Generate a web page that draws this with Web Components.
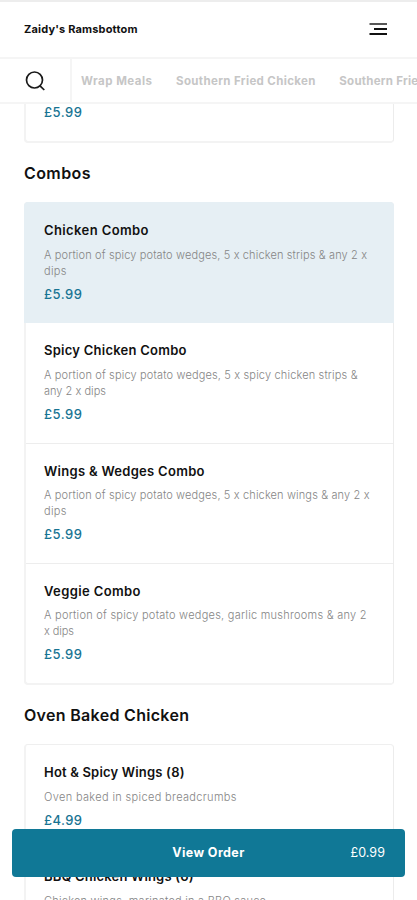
<!DOCTYPE html>
<html lang="en">
<head>
<meta charset="utf-8">
<title>Zaidy's Ramsbottom</title>
<style>
  html { background: #fff; }
  body {
    margin: 0;
    height: 900px;
    overflow: hidden;
    color: #111;
    font-family: Inter, "Open Sans", sans-serif;
  }
</style>
</head>
<body>

<menu-page>
  <site-header slot="header"><fit-text w="113.5">Zaidy's Ramsbottom</fit-text></site-header>
  <category-bar slot="header">
    <fit-text w="71">Wrap Meals</fit-text>
    <fit-text w="139.5">Southern Fried Chicken</fit-text>
    <fit-text w="127">Southern Fried Wraps</fit-text>
  </category-bar>

  <menu-card class="previous">
    <menu-item price="£5.99" class="tail"></menu-item>
  </menu-card>

  <menu-section>
    <fit-text slot="title" w="66.5">Combos</fit-text>
    <menu-card>
      <menu-item price="£5.99" selected>
        <fit-text slot="name" w="104.5">Chicken Combo</fit-text>
        <fit-text w="323">A portion of spicy potato wedges, 5 x chicken strips &amp; any 2 x</fit-text>
        <fit-text w="22.5">dips</fit-text>
      </menu-item>
      <menu-item price="£5.99">
        <fit-text slot="name" w="142.5">Spicy Chicken Combo</fit-text>
        <fit-text w="313.5">A portion of spicy potato wedges, 5 x spicy chicken strips &amp;</fit-text>
        <fit-text w="62">any 2 x dips</fit-text>
      </menu-item>
      <menu-item price="£5.99">
        <fit-text slot="name" w="160.5">Wings &amp; Wedges Combo</fit-text>
        <fit-text w="325.5">A portion of spicy potato wedges, 5 x chicken wings &amp; any 2 x</fit-text>
        <fit-text w="22.5">dips</fit-text>
      </menu-item>
      <menu-item price="£5.99">
        <fit-text slot="name" w="96.5">Veggie Combo</fit-text>
        <fit-text w="322.5">A portion of spicy potato wedges, garlic mushrooms &amp; any 2</fit-text>
        <fit-text w="30">x dips</fit-text>
      </menu-item>
    </menu-card>
  </menu-section>

  <menu-section>
    <fit-text slot="title" w="165">Oven Baked Chicken</fit-text>
    <menu-card>
      <menu-item price="£4.99">
        <fit-text slot="name" w="140.5">Hot &amp; Spicy Wings (8)</fit-text>
        <fit-text w="192.5">Oven baked in spiced breadcrumbs</fit-text>
      </menu-item>
      <menu-item price="£4.99">
        <fit-text slot="name" w="149.5">BBQ Chicken Wings (6)</fit-text>
        <fit-text w="222">Chicken wings, marinated in a BBQ sauce</fit-text>
      </menu-item>
    </menu-card>
  </menu-section>

  <order-bar slot="overlay" total="£0.99"><fit-text w="72">View Order</fit-text></order-bar>
</menu-page>

<script>
// every element here gets its shadow root the same way
class BaseElement extends HTMLElement {
  constructor() {
    super();
    this.attachShadow({ mode: "open" });
  }
  connectedCallback() {
    this.shadowRoot.innerHTML = this.render();
  }
}

// one line of text, tracked so that it runs to the width in "w"
class FitText extends BaseElement {
  render() {
    return `
      <style>
        :host { display: block; white-space: nowrap; width: max-content; }
        span { display: inline-block; }
      </style>
      <span><slot></slot></span>`;
  }
  fit() {
    const span = this.shadowRoot.querySelector("span");
    const count = this.textContent.length;
    const natural = span.getBoundingClientRect().width;
    span.style.letterSpacing = (this.getAttribute("w") - natural) / (count - 1) + "px";
  }
}

class MenuPage extends BaseElement {
  render() {
    return `
      <style>
        :host { display: block; height: 900px; overflow: hidden; }
        header { position: relative; z-index: 1; background: #fff; }
        main { padding: 0 23px 0 24px; }
      </style>
      <header><slot name="header"></slot></header>
      <main><slot></slot></main>
      <slot name="overlay"></slot>`;
  }
}

class SiteHeader extends BaseElement {
  render() {
    return `
      <style>
        :host {
          display: flex; align-items: center; justify-content: space-between;
          box-sizing: border-box; height: 59px; padding: 0 29px 1px 24px;
          border-top: 2px solid #ededed; border-bottom: 2px solid #f5f5f5;
          font-size: 11px; font-weight: 700;
        }
        svg { display: block; }
      </style>
      <slot></slot>
      <svg width="20" height="14" viewBox="0 0 20 14" fill="none" stroke="#111" stroke-width="1.8">
        <path d="M1.5 2h17.5" stroke="#444"/>
        <path d="M6 7h13M1.5 12h17.5"/>
      </svg>`;
  }
}

class CategoryBar extends BaseElement {
  render() {
    return `
      <style>
        :host {
          display: flex; box-sizing: border-box; height: 45px; overflow: hidden;
          border-bottom: 2px solid #f5f5f5;
        }
        .search {
          box-sizing: border-box; flex: none; width: 72px; padding: 11px 0 0 24px;
          border-right: 2px solid #f5f5f5;
        }
        .tabs {
          display: flex; align-items: center; gap: 23.5px; padding-left: 9px;
          color: #c6c6c6; font-size: 11.5px; font-weight: 700;
        }
        svg { display: block; }
      </style>
      <div class="search">
        <svg width="22" height="22" viewBox="0 0 22 22" fill="none" stroke="#1a1a1a" stroke-width="1.7">
          <circle cx="10.5" cy="10" r="8"/>
          <path d="M16 15.8l4.3 4.2"/>
        </svg>
      </div>
      <div class="tabs"><slot></slot></div>`;
  }
}

class MenuSection extends BaseElement {
  render() {
    return `
      <style>
        :host { display: block; }
        h2 {
          display: flex; align-items: center; height: 59px; margin: 0;
          font-size: 16px; font-weight: 600;
        }
      </style>
      <h2><slot name="title"></slot></h2>
      <slot></slot>`;
  }
}

class MenuCard extends BaseElement {
  render() {
    return `
      <style>
        :host {
          display: block; border-radius: 4px;
          border: solid #efefef; border-width: 1px 1px 2px 2px;
          border-color: #efefef #ececec #f3f3f3 #f3f3f3;
        }
        :host(.previous) { margin-top: -3px; }
      </style>
      <slot></slot>`;
  }
}

class MenuItem extends BaseElement {
  render() {
    return `
      <style>
        :host {
          display: block; box-sizing: border-box; padding: 17px 18px 18.8px;
          border-bottom: 1px solid #ededed;
        }
        :host(:last-child) { border-bottom: 0; padding-bottom: 18.8px; }
        /* the highlight covers the card's own border too */
        :host([selected]) {
          margin: -1px -1px 0 -2px; padding: 18px 19px 18.8px 20px;
          background: #e6eff4; border-bottom-color: #e6eff4;
          border-radius: 4px 4px 0 0;
        }
        :host(.tail) { padding-top: 0; padding-bottom: 19px; }
        :host(.tail) .name, :host(.tail) .text { display: none; }
        .name { display: flex; align-items: center; height: 20px; font-size: 13px; font-weight: 600; }
        .text { padding: 6.5px 0 5px; font-size: 11px; font-weight: 300; line-height: 16px; color: #858585; }
        .price { display: flex; align-items: center; height: 20px; font-size: 13px; font-weight: 500; color: #187493; }
      </style>
      <div class="name"><slot name="name"></slot></div>
      <div class="text"><slot></slot></div>
      <div class="price"><fit-text w="38">${this.getAttribute("price")}</fit-text></div>`;
  }
}

class OrderBar extends BaseElement {
  render() {
    return `
      <style>
        :host {
          position: fixed; left: 12px; right: 12px; top: 829px; height: 48px; z-index: 2;
          box-sizing: border-box; padding: 0 20px 1px;
          display: grid; grid-template-columns: 1fr auto 1fr; align-items: center;
          background: #107896; color: #fff; border-radius: 4px;
          font-size: 12.5px; font-weight: 700;
        }
        .total { grid-column: 3; justify-self: end; font-size: 12.5px; font-weight: 400; }
        .label { grid-column: 2; }
      </style>
      <div class="label"><slot></slot></div>
      <div class="total"><fit-text w="34.5">${this.getAttribute("total")}</fit-text></div>`;
  }
}

customElements.define("fit-text", FitText);
customElements.define("menu-page", MenuPage);
customElements.define("site-header", SiteHeader);
customElements.define("category-bar", CategoryBar);
customElements.define("menu-section", MenuSection);
customElements.define("menu-card", MenuCard);
customElements.define("menu-item", MenuItem);
customElements.define("order-bar", OrderBar);

// widths can only be measured once all the styles are in place
function fitAll(root) {
  root.querySelectorAll("*").forEach((el) => {
    if (el instanceof FitText) el.fit();
    else if (el.shadowRoot) fitAll(el.shadowRoot);
  });
}
fitAll(document);
</script>
</body>
</html>
